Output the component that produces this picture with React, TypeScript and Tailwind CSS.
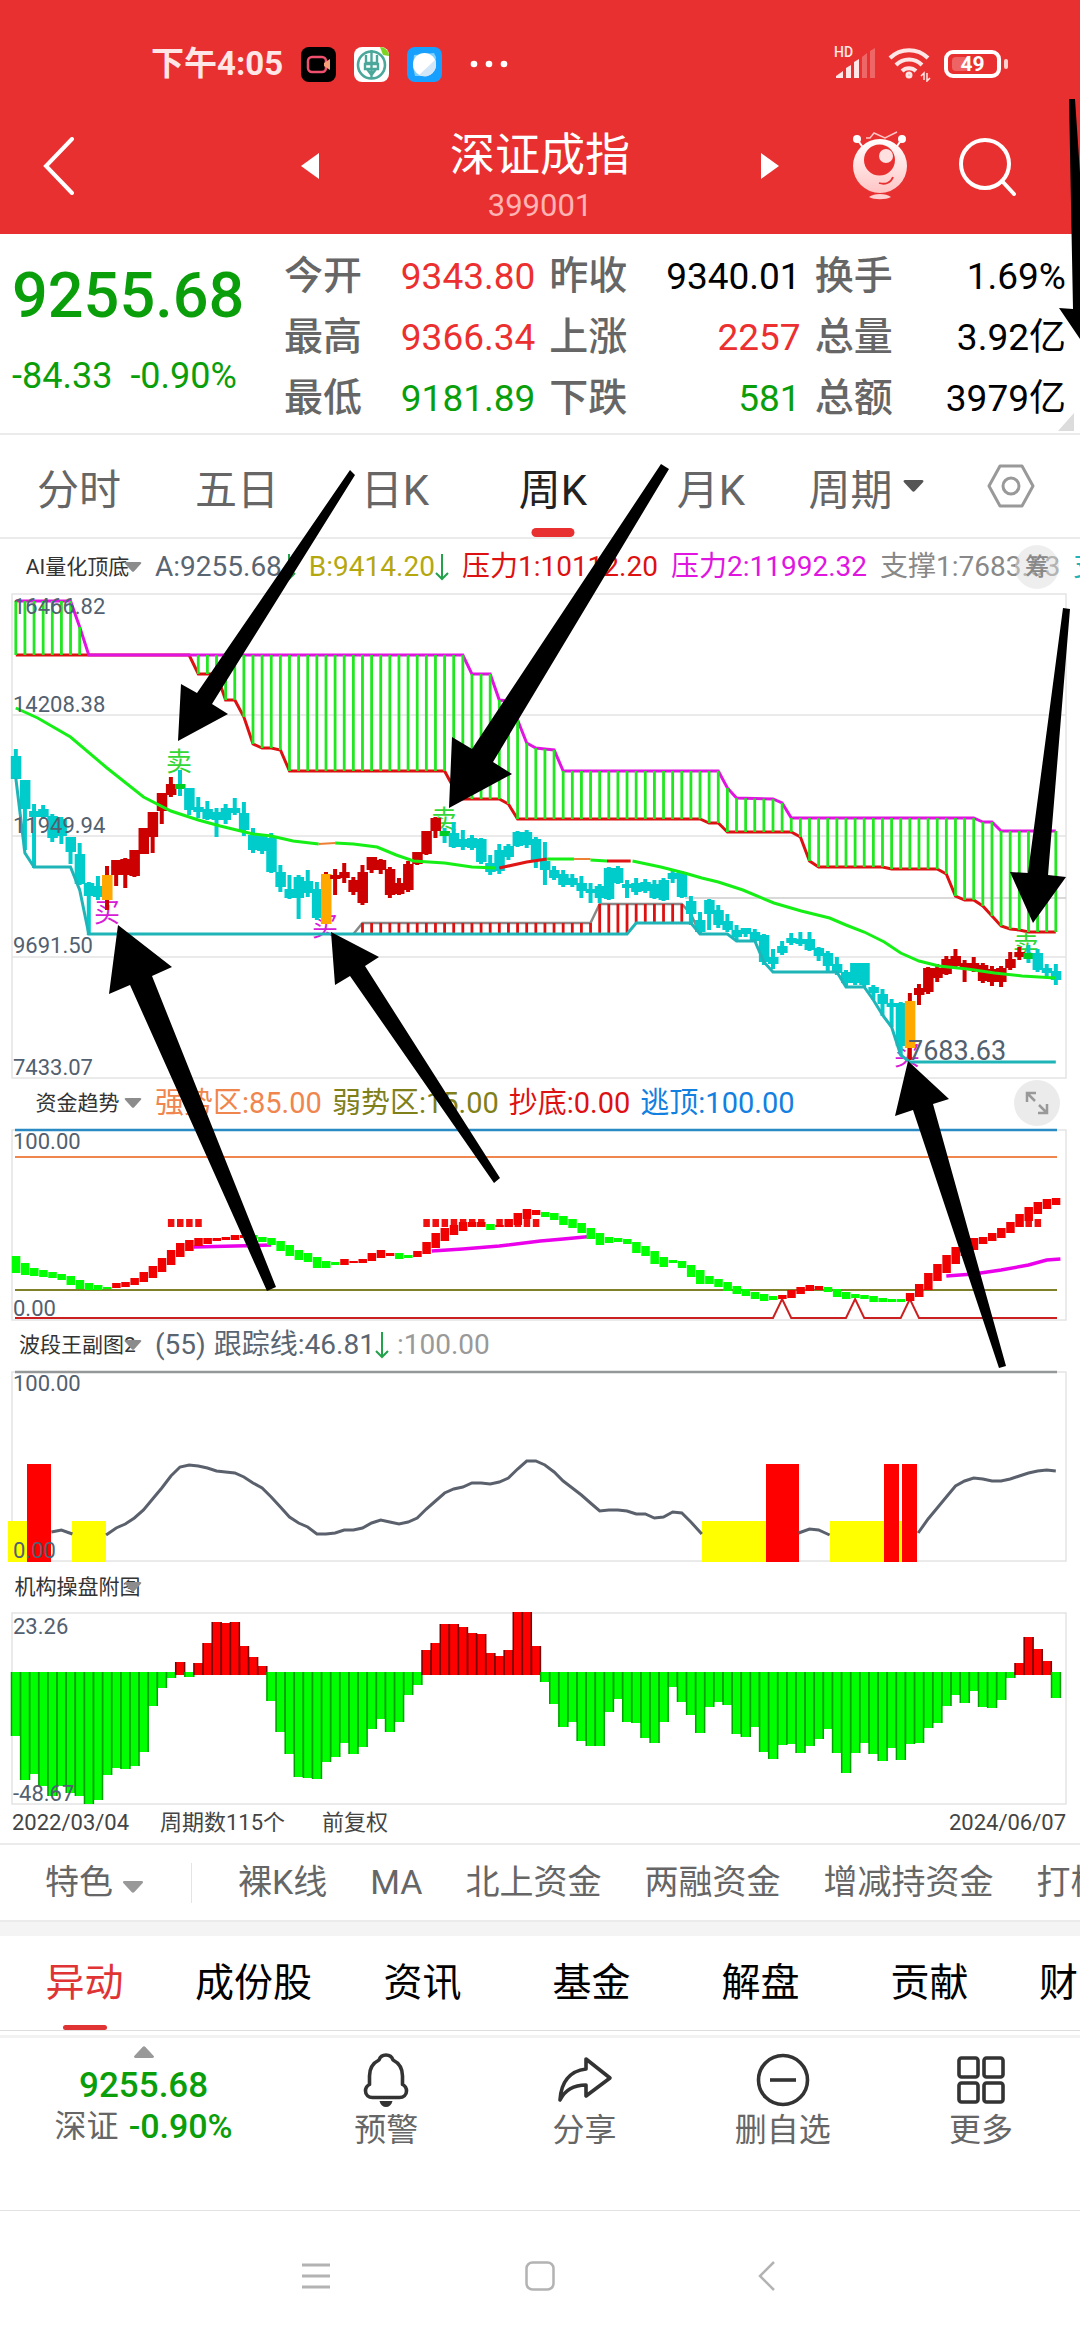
import React, { useState } from 'react';

type Point = [number, number];
type Tone = 'c' | 'r' | 'o' | 'g';

// Horizontal placement of the weekly bars, shared by all four charts
const BAR_COUNT = 115;
const FIRST_X = 15.8;
const STEP = 9.123;
const barX = (i: number) => FIRST_X + STEP * i;

const toPath = (points: Point[]) => points.map(([i, y]) => `${barX(i).toFixed(1)},${y}`).join(' ');

// Linear value of a stepped line at bar i
const valueAt = (points: Point[], i: number) => {
  for (let k = 1; k < points.length; k++) {
    const [x0, y0] = points[k - 1];
    const [x1, y1] = points[k];
    if (i >= x0 && i <= x1) {
      return y0 + ((y1 - y0) * (i - x0)) / (x1 - x0);
    }
  }
  return points[points.length - 1][1];
};

const bars = Array.from({ length: BAR_COUNT }, (_, i) => i);

const pressureHigh: Point[] = [
  [0, 21], [6, 21], [7, 47], [8, 75], [49, 75], [50, 94], [52, 94], [53, 120], [54, 121], [55, 140], [56, 163],
  [57, 168], [58, 169], [59, 170], [60, 191], [77, 191], [78, 208], [79, 218], [83, 219], [84, 223], [85, 238],
  [105, 238], [106, 242], [107, 242], [108, 251], [114, 251]
];

const pressureLow: Point[] = [
  [0, 75], [19, 75], [20, 94], [22, 94], [23, 120], [24, 120], [25, 137], [26, 164], [27, 168], [28, 168], [29, 170],
  [30, 191], [47, 191], [48, 208], [49, 219], [53, 219], [54, 224], [55, 239], [75, 239], [76, 243], [77, 243],
  [78, 252], [85, 252], [86, 257], [87, 281], [88, 287], [95, 287], [96, 289], [101, 289], [102, 294], [103, 316],
  [104, 320], [105, 320], [106, 326], [107, 336], [108, 346], [109, 349], [110, 350], [111, 352], [114, 352]
];

const supportLow: Point[] = [
  [0, 198], [1, 273], [2, 287], [6, 287], [7, 310], [8, 354], [67, 354], [68, 343], [74, 343], [75, 354], [78, 354],
  [79, 361], [81, 361], [82, 382], [83, 392], [90, 392], [91, 407], [93, 407], [94, 420], [95, 435], [96, 447],
  [97, 475], [98, 482], [114, 482]
];

const supportHigh: Point[] = [[37, 354], [38, 343], [63, 343], [64, 324], [73, 324], [74, 334], [75, 354]];

const trend: { color: string; width: number; points: Point[] }[] = [
  {
    color: '#15ef15',
    width: 3,
    points: [
      [0, 128], [2.4, 138], [6, 157], [10, 188], [14, 217], [17, 231], [20, 240], [22.4, 246], [26, 254], [28, 256],
      [30.4, 261], [33.2, 264]
    ]
  },
  { color: '#ee8033', width: 2, points: [[33.2, 264], [35, 263]] },
  {
    color: '#15ef15',
    width: 3,
    points: [[35, 263], [37, 264], [39.6, 267], [41.7, 275], [43.6, 281], [47, 283], [50, 287], [52.6, 288]]
  },
  { color: '#e01515', width: 3, points: [[53, 288], [56, 282], [58.2, 279]] },
  { color: '#15ef15', width: 3, points: [[58.2, 279], [61.2, 279]] },
  { color: '#ee8033', width: 2, points: [[61.2, 279], [63, 279]] },
  { color: '#15ef15', width: 3, points: [[63, 280], [64.8, 281]] },
  { color: '#e01515', width: 3, points: [[64.8, 281], [67.4, 281]] },
  {
    color: '#15ef15',
    width: 3,
    points: [
      [67.6, 281], [70.7, 287], [73.3, 293], [75.2, 298], [77, 302], [79.7, 310], [83.1, 323], [86.1, 331], [89.2, 338],
      [91, 345], [93, 352], [95.2, 362], [97, 373], [99, 381], [101.2, 386], [104.3, 389], [107.3, 393], [110.3, 396],
      [114, 398]
    ]
  }
];

// high, open/close top, open/close bottom, low
const candles: [Tone, number, number, number, number][] = [
  ['c', 169, 176, 199, 199], ['c', 200, 200, 229, 270], ['c', 224, 231, 237, 288], ['c', 225, 229, 237, 238],
  ['c', 234, 236, 258, 262], ['c', 237, 239, 256, 264], ['c', 257, 257, 272, 284], ['c', 263, 274, 304, 305],
  ['c', 302, 303, 316, 355], ['c', 296, 306, 317, 320], ['o', 286, 295, 320, 330], ['r', 280, 280, 295, 306],
  ['r', 278, 279, 295, 308], ['r', 270, 270, 296, 297], ['r', 248, 248, 274, 274], ['r', 232, 232, 257, 273],
  ['r', 213, 213, 231, 244], ['r', 197, 204, 215, 217], ['g', 190, 204, 209, 216], ['c', 208, 208, 230, 235],
  ['c', 217, 227, 232, 238], ['c', 221, 229, 239, 240], ['c', 228, 232, 240, 257], ['c', 224, 228, 240, 244],
  ['c', 218, 228, 233, 235], ['c', 222, 233, 250, 256], ['c', 248, 255, 270, 273], ['c', 255, 256, 271, 274],
  ['c', 253, 258, 292, 293], ['c', 285, 292, 307, 312], ['c', 295, 309, 318, 319], ['c', 295, 297, 318, 339],
  ['c', 290, 301, 313, 317], ['c', 302, 309, 338, 340], ['o', 292, 294, 344, 344], ['r', 289, 295, 299, 315],
  ['r', 283, 292, 298, 303], ['r', 297, 300, 312, 315], ['r', 285, 292, 323, 325], ['r', 277, 277, 290, 293],
  ['r', 279, 280, 290, 294], ['r', 287, 289, 315, 318], ['r', 298, 303, 314, 315], ['r', 281, 284, 310, 312],
  ['r', 272, 272, 284, 285], ['r', 251, 251, 274, 275], ['r', 237, 238, 251, 258], ['g', 248, 251, 256, 263],
  ['c', 242, 253, 267, 268], ['c', 250, 259, 267, 270], ['c', 255, 258, 268, 270], ['c', 258, 259, 282, 284],
  ['c', 275, 283, 292, 295], ['c', 264, 270, 291, 294], ['c', 264, 266, 277, 280], ['c', 251, 252, 266, 267],
  ['c', 250, 252, 265, 268], ['c', 257, 259, 280, 288], ['c', 262, 281, 290, 305], ['c', 286, 290, 298, 300],
  ['c', 290, 294, 305, 307], ['c', 294, 298, 305, 307], ['c', 296, 303, 311, 318], ['c', 303, 309, 313, 323],
  ['c', 304, 306, 318, 323], ['c', 287, 288, 319, 320], ['c', 286, 288, 303, 304], ['c', 300, 304, 308, 318],
  ['c', 298, 303, 312, 315], ['c', 299, 302, 311, 313], ['c', 300, 304, 318, 319], ['c', 298, 300, 320, 321],
  ['c', 291, 293, 299, 303], ['c', 291, 292, 317, 318], ['c', 316, 321, 334, 345], ['c', 332, 340, 352, 354],
  ['c', 319, 320, 334, 350], ['c', 325, 330, 345, 348], ['c', 334, 341, 350, 352], ['c', 345, 350, 357, 361],
  ['c', 348, 348, 354, 357], ['c', 349, 352, 361, 362], ['c', 354, 355, 382, 385], ['c', 369, 377, 384, 389],
  ['c', 361, 366, 373, 375], ['c', 353, 358, 363, 365], ['c', 352, 359, 364, 366], ['c', 352, 359, 370, 371],
  ['c', 367, 368, 376, 381], ['c', 371, 373, 386, 392], ['c', 377, 384, 393, 395], ['c', 390, 392, 403, 406],
  ['c', 383, 383, 403, 405], ['c', 383, 383, 405, 407], ['c', 405, 407, 413, 420], ['c', 409, 414, 424, 436],
  ['c', 419, 423, 427, 447], ['c', 422, 423, 466, 475], ['o', 413, 421, 468, 480], ['r', 404, 408, 415, 425],
  ['r', 387, 388, 412, 414], ['r', 384, 388, 398, 402], ['r', 376, 379, 394, 395], ['r', 369, 376, 386, 387],
  ['r', 380, 383, 388, 402], ['r', 377, 383, 390, 392], ['r', 383, 385, 401, 403], ['r', 386, 389, 402, 406],
  ['r', 386, 388, 402, 407], ['r', 372, 379, 388, 390], ['r', 367, 372, 377, 380], ['g', 365, 373, 379, 383],
  ['c', 369, 373, 390, 392], ['c', 384, 388, 393, 396], ['c', 384, 391, 400, 405]
];

const bodyColor = { c: '#00cccc', r: '#cc0000', o: '#ffa800', g: '#00cc22' };
const wickColor = { c: '#00cccc', r: '#cc0000', o: '#cc0000', g: '#00cccc' };

// top, bottom of each block; red inside fundRedRanges, green elsewhere
const fundBlocks: Point[] = [
  [186, 203], [193, 205], [198, 206], [200, 207], [202, 208], [204, 210], [206, 215], [210, 219], [213, 220],
  [215, 220], [217, 219], [213, 218], [212, 217], [208, 215], [202, 212], [196, 208], [188, 202], [180, 195],
  [173, 187], [170, 181], [168, 176], [168, 174], [168, 171], [167, 170], [165, 170], [165, 168], [165, 169],
  [167, 172], [168, 175], [171, 181], [175, 186], [180, 190], [183, 192], [187, 198], [191, 198], [192, 195],
  [189, 195], [191, 193], [189, 193], [183, 191], [180, 188], [183, 186], [183, 189], [185, 188], [181, 187],
  [172, 184], [163, 178], [158, 171], [155, 165], [152, 161], [152, 157], [152, 157], [154, 160], [155, 157],
  [149, 157], [143, 155], [139, 149], [140, 145], [142, 147], [143, 150], [146, 155], [149, 158], [153, 163],
  [158, 169], [163, 175], [167, 173], [168, 172], [169, 174], [172, 183], [176, 186], [181, 194], [187, 197],
  [190, 193], [191, 198], [195, 207], [200, 214], [206, 214], [209, 217], [212, 221], [216, 224], [219, 226],
  [222, 229], [224, 231], [226, 230], [225, 229], [220, 228], [217, 224], [215, 221], [216, 220], [217, 222],
  [219, 227], [222, 229], [224, 228], [225, 229], [226, 232], [228, 232], [229, 232], [229, 232], [223, 231],
  [214, 227], [203, 220], [194, 211], [185, 203], [177, 194], [172, 186], [168, 180], [167, 174], [163, 171],
  [158, 168], [152, 163], [144, 157], [137, 151], [132, 144], [129, 139], [128, 135]
];
const fundRedRanges: Point[] = [[11, 25], [36, 41], [44, 51], [53, 57], [84, 88], [98, 114]];
const fundMarks = [17, 18, 19, 20, 45, 46, 47, 48, 49, 50, 51, 53, 54, 55, 56, 57, 110, 111, 112];
const fundAverages: Point[][] = [
  [[19.5, 177], [28, 175]],
  [[45.6, 181], [49, 179], [53, 176], [57.5, 171], [60, 169], [63.5, 166]],
  [[102, 206], [105, 204], [108, 200], [111, 195], [113, 190], [114.5, 189]]
];
const bottomSignals = [84, 92, 98];

const trackLines: Point[][] = [
  [[3.9, 462], [5, 460], [6.2, 464]],
  [
    [9.9, 465], [11, 458], [12, 454], [13, 448], [14, 440], [15, 429], [16, 418], [17, 406], [18, 397], [19, 395],
    [20, 396], [21, 398], [22, 401], [23, 402], [24, 403], [25, 407], [26, 413], [27, 418], [28, 427], [29, 437],
    [30, 447], [31, 453], [32, 457], [33, 464], [34, 464], [35, 463], [36, 460], [37, 460], [38, 458], [39, 453],
    [40, 450], [41, 452], [42, 454], [43, 452], [44, 448], [45, 439], [46, 431], [47, 423], [48, 419], [49, 417],
    [50, 413], [51, 413], [52, 414], [53, 412], [54, 408], [55, 399], [56, 391], [57, 391], [58, 395], [59, 402],
    [60, 411], [61, 418], [62, 425], [63, 433], [64, 441], [65, 440], [66, 440], [67, 441], [68, 444], [69, 444],
    [70, 448], [71, 447], [72, 442], [73, 443], [74, 452], [75.2, 464]
  ],
  [[85.8, 463], [87, 459], [88, 460], [89.2, 465]],
  [
    [98.9, 463], [100, 449], [101, 438], [102, 427], [103, 416], [104, 411], [105, 408], [106, 409], [107, 411],
    [108, 411], [109, 409], [110, 406], [111, 403], [112, 401], [113, 400], [114, 401]
  ]
];

// x, width, top, fill
const waveBlocks: [number, number, number, string][] = [
  [8, 19, 451, '#ffff00'], [27, 24, 394, '#ff0000'], [72, 34, 451, '#ffff00'], [702, 64, 451, '#ffff00'],
  [766, 33, 394, '#ff0000'], [830, 72, 451, '#ffff00'], [884, 15, 394, '#ff0000'], [902, 15, 394, '#ff0000']
];

// Values below the zero line are drawn green, above it red
const flow = [
  186, 230, 224, 236, 246, 236, 243, 246, 254, 250, 225, 218, 219, 216, 202, 156, 138, 128, 112, 127, 113, 93, 72, 73,
  72, 96, 107, 116, 151, 182, 204, 227, 228, 229, 212, 207, 193, 204, 197, 179, 169, 182, 172, 145, 135, 100, 93, 74,
  74, 77, 83, 84, 103, 106, 100, 62, 62, 96, 132, 154, 177, 172, 191, 196, 196, 162, 149, 172, 173, 188, 193, 172, 137,
  152, 165, 183, 157, 152, 155, 184, 187, 177, 202, 209, 195, 194, 203, 196, 189, 179, 203, 223, 203, 193, 204, 211,
  198, 210, 194, 193, 178, 173, 156, 145, 153, 141, 157, 158, 150, 128, 113, 87, 99, 111, 148
];

const arrows = [
  '350,470 355,475 212,704 228,714 178,741 181,684 197,693',
  '661,464 669,469 493,762 512,774 449,808 452,737 472,749',
  '118,925 172,967 152,976 276,1287 267,1291 130,985 109,994',
  '331,932 379,957 365,966 500,1178 494,1183 350,976 335,985',
  '908,1061 949,1099 933,1104 1006,1366 999,1368 913,1110 895,1116',
  '1063,608 1070,609 1048,875 1066,877 1033,923 1010,872 1028,873',
  '1069,99 1075,99 1080,173 1080,339 1059,308 1073,309'
];

const quotes = [
  { label: '今开', value: '9343.80', color: 'text-[#ec2f2f]' },
  { label: '昨收', value: '9340.01', color: 'text-black' },
  { label: '换手', value: '1.69%', color: 'text-black' },
  { label: '最高', value: '9366.34', color: 'text-[#ec2f2f]' },
  { label: '上涨', value: '2257', color: 'text-[#ec2f2f]' },
  { label: '总量', value: '3.92亿', color: 'text-black' },
  { label: '最低', value: '9181.89', color: 'text-[#0a9e0a]' },
  { label: '下跌', value: '581', color: 'text-[#0a9e0a]' },
  { label: '总额', value: '3979亿', color: 'text-black' }
];

const periods = ['分时', '五日', '日K', '周K', '月K'];
const features = ['裸K线', 'MA', '北上资金', '两融资金', '增减持资金', '打板'];
const infoTabs = ['异动', '成份股', '资讯', '基金', '解盘', '贡献'];

const Triangle: React.FC<{ className?: string }> = ({ className }) => (
  <svg viewBox="0 0 20 12" className={className} fill="currentColor">
    <path d="M1.5 0h17c1.4 0 2 1.2 1 2.2L11.4 11c-.8.9-2 .9-2.8 0L.5 2.2C-.5 1.2.1 0 1.5 0z" />
  </svg>
);

const DownArrow = () => (
  <svg viewBox="0 0 14 28" className="h-7 w-3.5 shrink-0" fill="none" stroke="#22a24a" strokeWidth="2">
    <path d="M7 1v25M1 20l6 6 6-6" />
  </svg>
);

const IndicatorRow: React.FC<{ name: string; children?: React.ReactNode; action?: React.ReactNode }> = ({
  name,
  children,
  action
}) => (
  <div className="relative flex h-[46px] items-center overflow-hidden whitespace-nowrap leading-8">
    <button className="relative w-[155px] shrink-0 text-center text-[21px] text-[#333]">
      {name}
      <Triangle className="absolute top-1/2 right-[13px] h-2.5 w-[18px] -translate-y-1/2 text-[#8c8c8c]" />
    </button>
    {children}
    {action}
  </div>
);

const StatusBar = () => (
  <div className="flex h-[88px] items-center justify-between pt-10 pr-[79px] pl-[151px] text-[#ffe6e6]">
    <div className="flex items-center gap-[18px]">
      <span className="text-[33px] leading-9 font-bold">下午4:05</span>
      <svg viewBox="0 0 35 35" className="size-[35px]">
        <rect width="35" height="35" rx="8" fill="#000" />
        <rect x="7" y="10" width="18" height="15" rx="4" fill="none" stroke="#f0506e" strokeWidth="2.5" />
        <path d="M23 16l6-4v11l-6-4z" fill="#f6a07a" />
      </svg>
      <svg viewBox="0 0 35 35" className="size-[35px]">
        <rect width="35" height="35" rx="8" fill="#fff" />
        <circle cx="17.5" cy="18" r="13.5" fill="none" stroke="#4aa79a" strokeWidth="2.6" />
        <path d="M17.500 3v28M12 8v8h11V8M11 17h13v5H11zM13 22l4.500 6 4.500-6" fill="none" stroke="#4aa79a" strokeWidth="2.4" />
        <path d="M26 0c5 0 9 4 9 9l-6-1z" fill="#7ed321" />
      </svg>
      <svg viewBox="0 0 35 35" className="size-[35px]">
        <rect width="35" height="35" rx="8" fill="#17a0ff" />
        <path d="M6 20l1-12 20-2 2 4-1 12-8 7H8z" fill="#7fd0ff" />
        <circle cx="17.500" cy="17.500" r="11.500" fill="#fff" />
        <path d="M28 13a11.500 11.500 0 0 1-16 15z" fill="#d3e6f7" />
      </svg>
      <svg viewBox="0 0 38 8" className="ml-2.5 h-2 w-[38px]" fill="#fff">
        <circle cx="4" cy="4" r="3.300" />
        <circle cx="19" cy="4" r="3.300" />
        <circle cx="34" cy="4" r="3.300" />
      </svg>
    </div>
    <div className="flex items-center">
      <div className="relative mr-3">
        <span className="absolute -top-1 left-0 text-[14px] leading-4 font-medium">HD</span>
        <svg viewBox="0 0 42 32" className="h-8 w-[42px]" fill="currentColor">
          <path d="M2 30v-2l7-5v7zM12 20l5-3v13h-5zM20 14l5-3v19h-5z" />
          <path d="M28 9l5-4v25h-5zM36 3l5-3v30h-5z" opacity=".3" />
        </svg>
      </div>
      <svg viewBox="0 0 44 36" className="mr-3 h-9 w-11" fill="none" stroke="currentColor" strokeWidth="4">
        <path d="M2 12a27 27 0 0 1 38 0M8 19a18 18 0 0 1 26 0M14 25a10 10 0 0 1 14 0" />
        <circle cx="21" cy="29" r="2" strokeWidth="3" />
        <path d="M36 34v-7l-3 3M39 27v8l3-3" strokeWidth="1.500" />
      </svg>
      <div className="relative flex h-7 w-[57px] items-center justify-center rounded-[9px] border-4 border-current text-[21px] leading-6 font-bold text-white">
        <span className="absolute left-1 h-3.5 w-4 rounded bg-white/25" />
        <span className="relative">49</span>
        <span className="absolute -right-[11px] h-2.5 w-1 rounded-sm bg-[#ffd0d0]" />
      </div>
    </div>
  </div>
);

const Header = () => (
  <header className="flex h-[146px] items-center pt-2.5 text-white">
    <div className="flex-1">
      <button aria-label="返回" className="ml-10 block">
        <svg viewBox="0 0 36 58" className="h-[58px] w-9" fill="none" stroke="currentColor" strokeWidth="4">
          <path d="M32 2L6 29l26 27" strokeLinecap="round" />
        </svg>
      </button>
    </div>
    <div className="flex w-[478px] items-center justify-between">
      <button aria-label="上一只">
        <svg viewBox="0 0 18 26" className="h-[26px] w-[18px]" fill="currentColor">
          <path d="M18 0v26L0 13z" />
        </svg>
      </button>
      <div className="mt-6 text-center">
        <h1 className="text-[45px] leading-[52px]">深证成指</h1>
        <p className="mt-1 text-[31px] leading-10 text-[#ffb3b3]">399001</p>
      </div>
      <button aria-label="下一只">
        <svg viewBox="0 0 18 26" className="h-[26px] w-[18px]" fill="currentColor">
          <path d="M0 0v26l18-13z" />
        </svg>
      </button>
    </div>
    <div className="flex flex-1 items-center gap-12">
      <button aria-label="助手" className="ml-[71px] shrink-0">
        <svg viewBox="0 0 60 72" className="h-[72px] w-[60px]">
          <defs>
            <linearGradient id="robot" x1="0" y1="0" x2="0" y2="1">
              <stop offset="0" stopColor="#fff" />
              <stop offset="1" stopColor="#ffc4c4" />
            </linearGradient>
          </defs>
          <path d="M7 9l7 10M52 9l-7 10" stroke="#fff" strokeWidth="2" />
          <circle cx="7" cy="9" r="4" fill="#fff" />
          <circle cx="52" cy="9" r="4" fill="#fff" />
          <path d="M16 8h4l4-5 11 5 12-6" fill="none" stroke="#ffc4c4" strokeWidth="1.500" />
          <circle cx="30" cy="36" r="27" fill="url(#robot)" />
          <circle cx="29.500" cy="30" r="15.500" fill="#e93030" />
          <circle cx="36" cy="26" r="7" fill="#ffe0e0" />
          <path d="M29 53c6 2 12 0 14-6" fill="none" stroke="#e93030" strokeWidth="1.800" />
          <path d="M19 67c5-4 17-4 22 0-5 3-17 3-22 0z" fill="#ffd0d0" />
        </svg>
      </button>
      <button aria-label="搜索" className="shrink-0">
        <svg viewBox="0 0 58 60" className="h-[60px] w-[58px]" fill="none" stroke="currentColor" strokeWidth="4" strokeLinecap="round">
          <circle cx="27" cy="28" r="24" />
          <path d="M44 45l12 13" />
        </svg>
      </button>
    </div>
  </header>
);

const QuotePanel = () => (
  <section className="relative flex h-[201px] border-b-2 border-[#ebebeb] pr-3.5">
    <div className="w-[284px] shrink-0 pt-[22px] pl-3 text-[#0a9e0a]">
      <p className="text-[63px] leading-20 font-medium">9255.68</p>
      <p className="mt-5 flex gap-[18px] text-[36px] leading-10">
        <span>-84.33</span>
        <span>-0.90%</span>
      </p>
    </div>
    <dl className="grid flex-1 grid-cols-3 content-start gap-x-3.5 pt-3 text-[37px] leading-[61px]">
      {quotes.map(quote => (
        <div key={quote.label} className="flex justify-between whitespace-nowrap">
          <dt className="text-[39px] font-medium text-[#666]">{quote.label}</dt>
          <dd className={quote.color}>{quote.value}</dd>
        </div>
      ))}
    </dl>
    <svg viewBox="0 0 16 18" className="absolute right-1.5 bottom-0.5 h-[18px] w-4" fill="#dcdcdc">
      <path d="M16 0v18H0z" />
    </svg>
  </section>
);

const PeriodTabs = () => {
  const [active, setActive] = useState('周K');

  return (
    <nav className="flex h-[104px] border-b-2 border-[#ebebeb] text-[42px] text-[#666]">
      {periods.map(period => (
        <button
          key={period}
          onClick={() => setActive(period)}
          className={`relative flex-[158] pt-2 ${active === period ? 'text-[#222]' : ''}`}
        >
          {period}
          {active === period && (
            <span className="absolute bottom-0 left-1/2 h-[9px] w-[43px] -translate-x-1/2 rounded-full bg-[#e93030]" />
          )}
        </button>
      ))}
      <button className="flex flex-[152] items-center justify-center gap-2.5 pt-2">
        周期
        <Triangle className="-mt-2 h-3 w-[21px] text-[#555]" />
      </button>
      <button aria-label="设置" className="flex flex-[138] items-center justify-center">
        <svg viewBox="0 0 48 44" className="h-11 w-12" fill="none" stroke="#999" strokeWidth="3">
          <path d="M13 2h22l11 20-11 20H13L2 22z" strokeLinejoin="round" />
          <circle cx="24" cy="22" r="8" />
        </svg>
      </button>
    </nav>
  );
};

const PriceChart = () => (
  <svg viewBox="0 10 1080 490" className="block h-auto w-full" fontSize="22">
    <g fill="none" stroke="#e4e4e4" strokeWidth="1.500">
      <rect x="12" y="14" width="1054" height="484" />
      <path d="M12 135h1054M12 256h1054M12 377h1054" />
      <path d="M685 318h381" stroke="#ccc" />
    </g>

    {/* Pressure band */}
    <polyline points={toPath(pressureLow)} fill="none" stroke="#dd1111" strokeWidth="3" />
    <polyline points={toPath(pressureHigh)} fill="none" stroke="#e015e0" strokeWidth="3" />
    {bars
      .filter(i => valueAt(pressureLow, i) - valueAt(pressureHigh, i) > 1)
      .map(i => (
        <path
          key={i}
          d={`M${barX(i)} ${valueAt(pressureHigh, i)}V${valueAt(pressureLow, i)}`}
          stroke="#22e622"
          strokeWidth="2.800"
        />
      ))}

    {/* Support band */}
    <polyline points={toPath(supportHigh)} fill="none" stroke="#888" strokeWidth="2.500" />
    {bars
      .filter(i => i >= 38 && i <= 74)
      .map(i => (
        <path
          key={i}
          d={`M${barX(i)} ${valueAt(supportHigh, i)}V${valueAt(supportLow, i)}`}
          stroke="#dd1111"
          strokeWidth="2.800"
        />
      ))}

    <g fontSize="26" textAnchor="middle">
      <g fill="#33d633">
        <text x="179" y="191">卖</text>
        <text x="444" y="249">卖</text>
        <text x="1026" y="375">卖</text>
      </g>
      <g fill="#d61cd6">
        <text x="107" y="342">买</text>
        <text x="325" y="356">买</text>
        <text x="907" y="485">买</text>
      </g>
    </g>

    {candles.map(([tone, high, top, bottom, low], i) => (
      <g key={i}>
        <rect x={barX(i) - 2} y={high} width="4" height={low - high} fill={wickColor[tone]} />
        <rect x={barX(i) - 5} y={top} width="10.500" height={bottom - top} fill={bodyColor[tone]} />
      </g>
    ))}
    <polyline points={toPath(supportLow)} fill="none" stroke="#1fb5b8" strokeWidth="3" />
    {trend.map((part, i) => (
      <polyline key={i} points={toPath(part.points)} fill="none" stroke={part.color} strokeWidth={part.width} />
    ))}

    <g fill="#52606f">
      <text x="13" y="34">16466.82</text>
      <text x="13" y="132">14208.38</text>
      <text x="13" y="253">11949.94</text>
      <text x="13" y="373">9691.50</text>
      <text x="13" y="495">7433.07</text>
      <text x="908" y="480" fontSize="27">7683.63</text>
    </g>
  </svg>
);

const FundChart = () => (
  <svg viewBox="0 56 1080 196" className="block h-auto w-full" fontSize="22">
    <rect x="12" y="60" width="1054" height="190" fill="none" stroke="#e4e4e4" strokeWidth="1.500" />
    <path d="M15 60h1042" stroke="#2a8ac4" strokeWidth="2.500" />
    <path d="M15 87h1042" stroke="#f0854d" strokeWidth="2" />
    <path d="M15 220h1042" stroke="#80802a" strokeWidth="2" />
    <path
      d={`M15 248${bottomSignals.map(i => `H${barX(i - 1)}L${barX(i)} 229L${barX(i + 1)} 248`).join('')}H1057`}
      fill="none"
      stroke="#cc2020"
      strokeWidth="2"
    />
    {fundAverages.map((points, i) => (
      <polyline key={i} points={toPath(points)} fill="none" stroke="#ea00ea" strokeWidth="3.500" />
    ))}
    {fundMarks.map(i => (
      <rect key={i} x={barX(i) - 3} y="149" width="6.500" height="8" fill="#f01010" />
    ))}
    {fundBlocks.map(([top, bottom], i) => {
      const rising = fundRedRanges.some(([from, to]) => i >= from && i <= to);
      return (
        <rect key={i} x={barX(i) - 4} y={top} width="8.500" height={bottom - top} fill={rising ? '#f00000' : '#00ff00'} />
      );
    })}
    <g fill="#52606f">
      <text x="13" y="79">100.00</text>
      <text x="13" y="246">0.00</text>
    </g>
  </svg>
);

const WaveChart = () => (
  <svg viewBox="0 298 1080 196" className="block h-auto w-full" fontSize="22">
    <rect x="12" y="302" width="1054" height="189" fill="none" stroke="#e4e4e4" strokeWidth="1.500" />
    <path d="M15 302h1042" stroke="#959898" strokeWidth="2.500" />
    {waveBlocks.map(([x, width, top, fill]) => (
      <rect key={x} x={x} y={top} width={width} height={492 - top} fill={fill} />
    ))}
    {trackLines.map((points, i) => (
      <polyline key={i} points={toPath(points)} fill="none" stroke="#5a616c" strokeWidth="3" />
    ))}
    <g fill="#52606f">
      <text x="13" y="321">100.00</text>
      <text x="13" y="488">0.00</text>
    </g>
  </svg>
);

const FlowChart = () => (
  <svg viewBox="0 60 1080 198" className="block h-auto w-full" fontSize="22">
    <rect x="12" y="63" width="1054" height="191" fill="none" stroke="#e4e4e4" strokeWidth="1.500" />
    {flow.map((value, i) => {
      const up = value < 122;
      const top = up ? value : 122;
      const bottom = up ? 125 : value;
      return (
        <g key={i}>
          <rect x={barX(i) - 4.5} y={top} width="9.500" height={bottom - top} fill={up ? '#ff0000' : '#00ff00'} />
          <path
            d={`M${barX(i) - 4.3} ${top}V${bottom}M${barX(i) + 4.6} ${top}V${bottom}`}
            stroke={up ? '#7a0000' : '#00a000'}
            strokeWidth="1.500"
          />
        </g>
      );
    })}
    <g fill="#52606f">
      <text x="13" y="84">23.26</text>
      <text x="13" y="251">-48.67</text>
    </g>
  </svg>
);

const InfoTabs = () => {
  const [active, setActive] = useState('异动');

  return (
    <nav className="flex h-[95px] overflow-hidden border-b border-[#dedede] text-[39px] whitespace-nowrap text-black">
      {infoTabs.map(tab => (
        <button
          key={tab}
          onClick={() => setActive(tab)}
          className={`relative w-[169px] shrink-0 ${active === tab ? 'text-[#e03434]' : ''}`}
        >
          {tab}
          {active === tab && (
            <span className="absolute bottom-0 left-1/2 h-[5px] w-11 -translate-x-1/2 rounded-full bg-[#e03434]" />
          )}
        </button>
      ))}
      <button className="shrink-0 pl-[25px]">财</button>
    </nav>
  );
};

const BottomBar = () => (
  <footer className="flex h-[172px] text-[32px] leading-10 text-[#666]">
    <button className="flex flex-[287] flex-col items-center pt-2">
      <Triangle className="h-3 w-5 rotate-180 text-[#999]" />
      <span className="mt-2 text-[35px] leading-10 font-medium text-[#0a9e0a]">9255.68</span>
      <span className="flex gap-2.5">
        深证
        <span className="text-[34px] font-medium text-[#0a9e0a]">-0.90%</span>
      </span>
    </button>
    <button className="flex flex-[198] flex-col items-center gap-0.5 pt-3.5">
      <svg viewBox="0 0 46 56" className="h-14 w-[46px]" fill="none" stroke="#333" strokeWidth="3.600" strokeLinejoin="round">
        <path d="M23 3c-3.500 0-6 2-7 5C10 11 6.500 17 6.500 24v8.500C3.500 34 2.500 37 2.500 39c0 4 3 6.500 7 6.500h27c4 0 7-2.500 7-6.500 0-2-1-5-4-6.500V24c0-7-3.500-13-9.500-16-1-3-3.500-5-7-5z" />
        <path d="M16.500 49h13c-1 4-3.500 6-6.500 6s-5.500-2-6.500-6z" fill="#333" stroke="none" />
      </svg>
      <span>预警</span>
    </button>
    <button className="flex flex-[198] flex-col items-center gap-0.5 pt-3.5">
      <svg viewBox="0 0 58 56" className="h-14 w-[58px]" fill="none" stroke="#333" strokeWidth="3.600" strokeLinejoin="round">
        <path d="M30 7l24 19-24 18V33C17 33 9 38 4 48c1-17 9-29 26-31z" />
      </svg>
      <span>分享</span>
    </button>
    <button className="flex flex-[198] flex-col items-center gap-0.5 pt-3.5">
      <svg viewBox="0 0 56 56" className="size-14" fill="none" stroke="#333" strokeWidth="3.600">
        <circle cx="28" cy="28" r="24.500" />
        <path d="M15 28h26" />
      </svg>
      <span>删自选</span>
    </button>
    <button className="flex flex-[198] flex-col items-center gap-0.5 pt-3.5">
      <svg viewBox="0 0 56 56" className="size-14" fill="none" stroke="#333" strokeWidth="3.600">
        <rect x="6" y="6" width="19" height="19" rx="2.500" />
        <rect x="31" y="6" width="19" height="19" rx="2.500" />
        <rect x="6" y="31" width="19" height="19" rx="2.500" />
        <rect x="31" y="31" width="19" height="19" rx="2.500" />
      </svg>
      <span>更多</span>
    </button>
  </footer>
);

const SystemNav = () => (
  <nav className="flex h-[130px] items-center justify-center gap-[194px] border-t border-[#e2e2e2]">
    <button aria-label="菜单">
      <svg viewBox="0 0 30 30" className="size-[30px]" stroke="#b3b3b3" strokeWidth="3">
        <path d="M1 4h28M1 15h28M1 26h28" />
      </svg>
    </button>
    <button aria-label="主页">
      <svg viewBox="0 0 30 30" className="size-[30px]" fill="none" stroke="#b3b3b3" strokeWidth="2.500">
        <rect x="1.500" y="1.500" width="27" height="27" rx="6" />
      </svg>
    </button>
    <button aria-label="后退">
      <svg viewBox="0 0 30 30" className="size-[30px]" fill="none" stroke="#b3b3b3" strokeWidth="2.500">
        <path d="M25 1L11 15l14 14" />
      </svg>
    </button>
  </nav>
);

export default function App() {
  return (
    <div className="relative overflow-hidden bg-white font-['Roboto','Noto_Sans_CJK_SC',sans-serif]">
      <div className="bg-[#e93030]">
        <StatusBar />
        <Header />
      </div>
      <QuotePanel />
      <PeriodTabs />

      <main>
        <div className="pt-[5px]">
          <IndicatorRow
            name="AI量化顶底"
            action={
              <button className="absolute right-[21px] flex size-11 items-center justify-center rounded-full bg-[#dddddd]/50 text-[24px] font-medium text-[#888]">
                筹
              </button>
            }
          >
            <div className="flex items-center gap-[13px] text-[28px]">
              <span className="flex items-center text-[#5a6572]">A:9255.68<DownArrow /></span>
              <span className="flex items-center text-[#b5a80f]">B:9414.20<DownArrow /></span>
              <span className="text-[#dd1111]">压力1:10112.20</span>
              <span className="text-[#e015e0]">压力2:11992.32</span>
              <span className="text-[#888]">支撑1:7683.63</span>
              <span className="text-[#1fb5b8]">支撑2</span>
            </div>
          </IndicatorRow>
        </div>
        <PriceChart />

        <IndicatorRow
          name="资金趋势"
          action={
            <button
              aria-label="展开"
              className="absolute right-5 flex size-[46px] items-center justify-center rounded-full bg-[#ebebeb]"
            >
              <svg viewBox="0 0 26 26" className="size-[26px]" fill="none" stroke="#999" strokeWidth="2.500">
                <path d="M3 12V3h9M3 3l8 8M23 14v9h-9M23 23l-8-8" />
              </svg>
            </button>
          }
        >
          <div className="flex items-center gap-2.5 text-[29px]">
            <span className="text-[#f0854d]">强势区:85.00</span>
            <span className="text-[#80801a]">弱势区:15.00</span>
            <span className="text-[#dd1111]">抄底:0.00</span>
            <span className="text-[#1280e0]">逃顶:100.00</span>
          </div>
        </IndicatorRow>
        <FundChart />

        <IndicatorRow name="波段王副图2">
          <div className="flex items-center gap-2 text-[28px]">
            <span className="text-[#5a6572]">(55)</span>
            <span className="flex items-center text-[#5a6572]">跟踪线:46.81<DownArrow /></span>
            <span className="text-[#999]">:100.00</span>
          </div>
        </IndicatorRow>
        <WaveChart />

        <IndicatorRow name="机构操盘附图" />
        <FlowChart />

        <div className="flex h-[37px] items-start border-b-2 border-[#ebebeb] pr-3.5 pl-3 text-[22px] leading-[30px] text-[#444]">
          <span className="w-[148px]">2022/03/04</span>
          <span className="w-[162px]">周期数115个</span>
          <span>前复权</span>
          <span className="ml-auto">2024/06/07</span>
        </div>
      </main>

      <div className="flex h-[75px] items-center overflow-hidden text-[34px] whitespace-nowrap text-[#666]">
        <button className="flex w-[191px] shrink-0 items-center gap-2.5 pl-[45px]">
          特色
          <Triangle className="mt-2 h-3 w-5 text-[#999]" />
        </button>
        <span className="h-10 w-px shrink-0 bg-[#e4e4e4]" />
        <div className="flex gap-[43px] pl-[46px]">
          {features.map(feature => (
            <button key={feature} className="shrink-0">{feature}</button>
          ))}
        </div>
      </div>
      <div className="h-4 border-t-2 border-[#ebebeb] bg-[#f4f4f4]" />

      <InfoTabs />
      <div className="mt-1 h-[3px] bg-[#f2f2f2]" />
      <BottomBar />
      <SystemNav />

      {/* Hand-drawn annotations over the whole screen */}
      <svg viewBox="0 0 1080 2340" className="pointer-events-none absolute top-0 left-0 h-auto w-full">
        {arrows.map(points => (
          <polygon key={points} points={points} fill="#000" />
        ))}
      </svg>
    </div>
  );
}
